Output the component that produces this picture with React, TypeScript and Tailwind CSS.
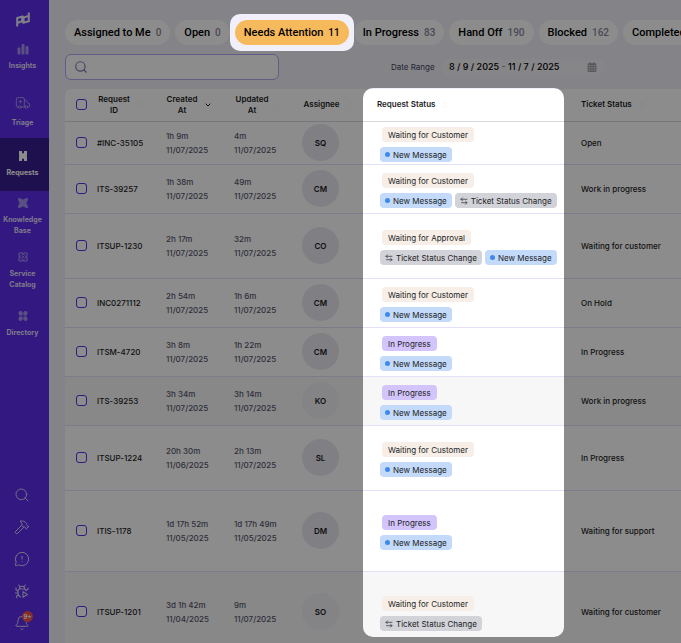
import React from 'react';
import { Ambulance, ChevronDown, ChevronsUpDown, Hammer, MessageCircleWarning, Search, Bell } from 'lucide-react';
import { FaCalendarDays } from 'react-icons/fa6';
import clsx from 'clsx';

type Tag = 'message' | 'change';

interface RequestRow {
  id: string;
  created: [string, string];
  updated: [string, string];
  assignee: string;
  status: string;
  tags: Tag[];
  ticket: string;
  height: string;
  shaded?: boolean;
}

const TABS = [
  { name: 'Assigned to Me', count: 0 },
  { name: 'Open', count: 0 },
  { name: 'Needs Attention', count: 11, active: true },
  { name: 'In Progress', count: 83 },
  { name: 'Hand Off', count: 190 },
  { name: 'Blocked', count: 162 },
  { name: 'Completed' },
];

const ROWS: RequestRow[] = [
  { id: '#INC-35105', created: ['1h 9m', '11/07/2025'], updated: ['4m', '11/07/2025'], assignee: 'SQ', status: 'Waiting for Customer', tags: ['message'], ticket: 'Open', height: 'h-[43px]' },
  { id: 'ITS-39257', created: ['1h 38m', '11/07/2025'], updated: ['49m', '11/07/2025'], assignee: 'CM', status: 'Waiting for Customer', tags: ['message', 'change'], ticket: 'Work in progress', height: 'h-[49px]' },
  { id: 'ITSUP-1230', created: ['2h 17m', '11/07/2025'], updated: ['32m', '11/07/2025'], assignee: 'CO', status: 'Waiting for Approval', tags: ['change', 'message'], ticket: 'Waiting for customer', height: 'h-[65px]' },
  { id: 'INC0271112', created: ['2h 54m', '11/07/2025'], updated: ['1h 6m', '11/07/2025'], assignee: 'CM', status: 'Waiting for Customer', tags: ['message'], ticket: 'On Hold', height: 'h-[49px]' },
  { id: 'ITSM-4720', created: ['3h 8m', '11/07/2025'], updated: ['1h 22m', '11/07/2025'], assignee: 'CM', status: 'In Progress', tags: ['message'], ticket: 'In Progress', height: 'h-[49px]' },
  { id: 'ITS-39253', created: ['3h 34m', '11/07/2025'], updated: ['3h 14m', '11/07/2025'], assignee: 'KO', status: 'In Progress', tags: ['message'], ticket: 'Work in progress', height: 'h-[49px]', shaded: true },
  { id: 'ITSUP-1224', created: ['20h 30m', '11/06/2025'], updated: ['2h 13m', '11/07/2025'], assignee: 'SL', status: 'Waiting for Customer', tags: ['message'], ticket: 'In Progress', height: 'h-[65px]' },
  { id: 'ITIS-1178', created: ['1d 17h 52m', '11/05/2025'], updated: ['1d 17h 49m', '11/05/2025'], assignee: 'DM', status: 'In Progress', tags: ['message'], ticket: 'Waiting for support', height: 'h-[81px]' },
  { id: 'ITSUP-1201', created: ['3d 1h 42m', '11/04/2025'], updated: ['9m', '11/07/2025'], assignee: 'SO', status: 'Waiting for Customer', tags: ['change'], ticket: 'Waiting for customer', height: 'h-[81px]', shaded: true },
];

const Logo = () => (
  <svg viewBox="0 0 14 15" className="w-[14px] h-[15px]" fill="none" stroke="#ece9f8" strokeWidth="2" strokeLinejoin="miter">
    <path d="M1.200 14.500V6L6.200 4.500v4.700l-5 1.800" />
    <path d="M12.800.5v8.700L7.600 10.700V5.600l5.200-1.800" />
    <path d="M6 4.500l1.800 1.100M6 9.200l1.800 1.300" />
  </svg>
);

const InsightsIcon = () => (
  <svg viewBox="0 0 12 12" className="size-3" fill="currentColor">
    <rect x="0.500" y="4.500" width="3" height="7" rx="1" />
    <rect x="4.500" y="1" width="3" height="10.500" rx="1" />
    <rect x="8.500" y="3" width="3" height="8.500" rx="1" />
  </svg>
);

const RequestsIcon = () => (
  <svg viewBox="0 0 12 12" className="size-3" fill="currentColor">
    <path d="M2 1h3v1.800l1 1 1-1V1h3v4.400l-.6.6.6.6V11H7V9.200l-1-1-1 1V11H2V6.600l.6-.6-.6-.6z" />
  </svg>
);

const KnowledgeIcon = () => (
  <svg viewBox="0 0 12 12" className="size-3" fill="currentColor">
    <path d="M1 1c1.800 0 3.700.5 5 1.800C7.300 1.500 9.200 1 11 1c0 1.900-.6 3.700-1.800 5 1.200 1.300 1.800 3.100 1.800 5-1.800 0-3.700-.6-5-1.800C4.700 10.400 2.800 11 1 11c0-1.900.6-3.700 1.800-5C1.600 4.700 1 2.900 1 1z" />
  </svg>
);

const CatalogIcon = () => (
  <svg viewBox="0 0 12 12" className="size-3" fill="none" stroke="currentColor" strokeWidth=".7">
    <rect x="2" y="2" width="8" height="8" rx="2" />
    <ellipse cx="6" cy="6" rx="5.600" ry="2.400" transform="rotate(45 6 6)" />
    <ellipse cx="6" cy="6" rx="5.600" ry="2.400" transform="rotate(-45 6 6)" />
    <circle cx="6" cy="6" r=".8" fill="currentColor" />
  </svg>
);

const DirectoryIcon = () => (
  <svg viewBox="0 0 12 12" className="size-3" fill="currentColor">
    <path d="M3.500 1a2.300 2.300 0 0 1 2 3.400v1.100H4.400A2.300 2.300 0 1 1 3.500 1z" />
    <path d="M8.500 1a2.300 2.300 0 0 0-2 3.400v1.100h1.100A2.300 2.300 0 1 0 8.500 1z" />
    <path d="M3.500 11a2.300 2.300 0 0 0 2-3.400V6.500H4.400A2.300 2.300 0 1 0 3.500 11z" />
    <path d="M8.500 11a2.300 2.300 0 0 1-2-3.400V6.500h1.100A2.300 2.300 0 1 1 8.500 11z" />
  </svg>
);

const BugPlayIcon = () => (
  <svg viewBox="0 0 24 24" className="size-4" fill="none" stroke="currentColor" strokeWidth="1.600" strokeLinecap="round" strokeLinejoin="round">
    <path d="M7 3l2 2.500M17 3l-2 2.500M8 9a4 4 0 0 1 8 0zM8 9c-1.500.6-2 2-2 4v2c0 3 1.500 5 4 6M16 9c1 .5 1.700 1.200 2 2.500" />
    <path d="M6 12L3 10.500V7M6 15H2M6.500 18L4 19.500V22M18 11l3-1.500V7" />
    <path d="M13.500 13v8.500l6.500-4.200z" />
  </svg>
);

const SwapIcon = () => (
  <svg viewBox="0 0 8 8" className="size-2 shrink-0" fill="none" stroke="#3c3c46" strokeWidth=".8" strokeLinecap="round" strokeLinejoin="round">
    <path d="M7 2.300H1M2.500.8L1 2.300l1.500 1.500M1.500 5.700H7M5.500 4.200L7 5.700 5.500 7.200" />
  </svg>
);

const NAV = [
  { label: 'Insights', icon: <InsightsIcon />, box: 'h-[53px] pt-[13px] gap-[5px]' },
  { label: 'Triage', icon: <Ambulance className="size-4" strokeWidth={1.5} />, box: 'h-[55px] pt-3 gap-[6px]' },
  { label: 'Requests', icon: <RequestsIcon />, box: 'h-[53px] pt-3 gap-[5px]', active: true },
  { label: 'Knowledge Base', icon: <KnowledgeIcon />, box: 'h-[53px] pt-[6px] gap-[5px]' },
  { label: 'Service Catalog', icon: <CatalogIcon />, box: 'h-[59px] pt-[7px] gap-[5px]' },
  { label: 'Directory', icon: <DirectoryIcon />, box: 'h-[53px] pt-[7px] gap-[5px]' },
];

const Sidebar: React.FC = () => (
  <aside className="w-[49px] shrink-0 h-full flex flex-col justify-between bg-[#5d2cec] overflow-hidden">
    <nav className="flex flex-col">
      <div className="h-[30px] pt-3 pl-4">
        <Logo />
      </div>
      {NAV.map((item) => (
        <a
          key={item.label}
          href="#"
          className={clsx(
            'flex flex-col items-center pl-1 pr-2 text-center text-[7px] leading-[11px] font-bold',
            item.box,
            item.active ? 'bg-[#381d91] text-white' : 'text-[#e2dbfb]',
          )}
        >
          <span className={item.active ? '' : 'text-[#a493ee]'}>{item.icon}</span>
          {item.label}
        </a>
      ))}
    </nav>

    <div className="flex flex-col gap-4 pl-[14px] text-[#d4ccf5]">
      <button aria-label="Search" className="size-4"><Search className="size-4" strokeWidth={1.5} /></button>
      <button aria-label="Tools" className="size-4"><Hammer className="size-4" strokeWidth={1.5} /></button>
      <button aria-label="Feedback" className="size-4"><MessageCircleWarning className="size-4" strokeWidth={1.5} /></button>
      <button aria-label="Debug" className="size-4"><BugPlayIcon /></button>
      <button aria-label="Notifications" className="relative size-4">
        <Bell className="size-4" strokeWidth={1.5} />
        <span className="absolute left-2 -top-1 size-[11px] rounded-full bg-[#f0524b] text-white text-[6px] leading-[11px] font-bold text-center">9+</span>
      </button>
      <span className="size-4 -mt-1 -mb-4 rounded-full bg-[#d4ccf5]" />
    </div>
  </aside>
);

const StatusTag: React.FC<{ tag: Tag }> = ({ tag }) =>
  tag === 'message' ? (
    <span className="h-[15px] px-[5px] flex items-center gap-[3px] rounded bg-[#c3dafa]">
      <span className="size-[5px] rounded-full bg-[#3f8ae8]" />
      New Message
    </span>
  ) : (
    <span className="h-[15px] px-[5px] flex items-center gap-[3px] rounded bg-[#d2d2d9]">
      <SwapIcon />
      Ticket Status Change
    </span>
  );

const Checkbox: React.FC<{ label: string }> = ({ label }) => (
  <input
    type="checkbox"
    aria-label={label}
    className="block ml-[11px] size-[11px] appearance-none rounded-[3px] border border-[#5d2cec] bg-white"
  />
);

const SortHint = () => <ChevronsUpDown className="size-2 shrink-0 text-[#f0f0f4]" strokeWidth={2} />;

const TimeCell: React.FC<{ value: [string, string] }> = ({ value }) => (
  <td className="p-0 text-[8px] leading-[14px] font-medium text-[#56566c]">
    {value[0]}
    <br />
    {value[1]}
  </td>
);

export default function App() {
  return (
    <div className="flex h-screen overflow-hidden bg-[#f0eef8] font-['Inter',sans-serif] text-[#1d1d24]">
      <Sidebar />

      <main className="flex-1 min-w-0 pl-4 pt-5">
        {/* Queue tabs */}
        <div className="flex gap-[5px] font-['Roboto',sans-serif]">
          {TABS.map((tab) => (
            <button
              key={tab.name}
              className={clsx(
                'h-[25px] shrink-0 rounded-full px-[9px] text-[11px] leading-[25px] font-medium whitespace-nowrap text-black',
                tab.active ? 'relative z-20' : 'bg-white',
              )}
            >
              {tab.active && <span className="absolute -inset-x-[5px] -inset-y-[6px] -z-10 rounded-[10px] bg-[#f1effa]" />}
              {tab.active && <span className="absolute inset-0 -z-10 rounded-full bg-[#f6b95b]" />}
              {tab.name}
              {tab.count !== undefined && (
                <span className={clsx('ml-[5px] text-[10px] font-medium', !tab.active && 'text-[#8a889c]')}>{tab.count}</span>
              )}
            </button>
          ))}
        </div>

        {/* Search and date range */}
        <div className="mt-[9px] flex items-center">
          <div className="relative w-[214px] shrink-0">
            <Search className="absolute left-[9px] top-[6px] size-[14px] text-[#7f7bb0]" strokeWidth={2} />
            <input
              type="search"
              aria-label="Search requests"
              className="block h-[26px] w-full rounded-md border border-[#b5a6f3] bg-white pl-7 text-[10px] outline-none"
            />
          </div>
          <span className="ml-28 w-[50px] shrink-0 whitespace-nowrap text-[8px] text-[#45455a]">Date Range</span>
          <button
            aria-label="Date range"
            className="flex h-[17px] w-[164px] shrink-0 items-center justify-between rounded-full bg-[#f4f2f6] px-2 text-[9px] font-medium whitespace-nowrap text-black"
          >
            <span>8 / 9 / 2025 <span className="text-[#8a889c]">-</span> 11 / 7 / 2025</span>
            <FaCalendarDays className="size-[10px] text-[#a3a3a9]" />
          </button>
        </div>

        {/* Requests table */}
        <div className="relative mt-[9px] rounded-tl-md bg-white">
          <table className="w-full table-fixed border-collapse text-left text-[8px]">
            <colgroup>
              <col className="w-8" />
              <col className="w-[69px]" />
              <col className="w-[68px]" />
              <col className="w-[68px]" />
              <col className="w-[75px]" />
              <col className="w-[204px]" />
              <col />
            </colgroup>
            <thead>
              <tr className="h-8 border-b border-[#d9d9e0] leading-[11px]">
                <th className="p-0"><Checkbox label="Select all" /></th>
                <th className="p-0 font-semibold">
                  <div className="flex items-center gap-[6px]">
                    <span className="block w-[34px] text-center">Request ID</span>
                    <SortHint />
                  </div>
                </th>
                <th className="p-0 font-semibold">
                  <div className="flex items-center gap-[6px]">
                    <span className="block w-8 text-center">Created At</span>
                    <ChevronDown className="size-2" strokeWidth={3} />
                  </div>
                </th>
                <th className="p-0 font-semibold">
                  <div className="flex items-center gap-[6px]">
                    <span className="block w-9 text-center">Updated At</span>
                    <SortHint />
                  </div>
                </th>
                <th className="p-0 font-semibold">
                  <div className="flex items-center gap-[6px]">
                    <span className="block w-[39px] text-center">Assignee</span>
                    <SortHint />
                  </div>
                </th>
                <th className="p-0 font-semibold">
                  <div className="flex items-center gap-[6px]">Request Status <SortHint /></div>
                </th>
                <th className="p-0 font-semibold">
                  <div className="flex items-center gap-[6px]">Ticket Status <SortHint /></div>
                </th>
              </tr>
            </thead>
            <tbody>
              {ROWS.map((row) => (
                <tr key={row.id} className={clsx('border-b border-[#e4e0fa]', row.height, row.shaded && 'bg-[#f7f7f8]')}>
                  <td className="p-0"><Checkbox label={`Select ${row.id}`} /></td>
                  <td className="p-0 font-medium">{row.id}</td>
                  <TimeCell value={row.created} />
                  <TimeCell value={row.updated} />
                  <td className="p-0">
                    <span
                      className={clsx(
                        'flex size-[37px] items-center justify-center rounded-full font-semibold',
                        row.shaded ? 'bg-[#f0eff5]' : 'bg-[#e9e7f1]',
                      )}
                    >
                      {row.assignee}
                    </span>
                  </td>
                  <td className="p-0">
                    <div className="flex flex-col items-start gap-[5px] pl-[3px] pt-1 whitespace-nowrap">
                      <span
                        className={clsx(
                          'ml-[2px] flex h-[15px] items-center rounded px-[6px]',
                          row.status === 'In Progress' ? 'bg-[#d3c5fb]' : 'bg-[#f6eee7]',
                        )}
                      >
                        {row.status}
                      </span>
                      <div className="flex gap-[3px]">
                        {row.tags.map((tag) => <StatusTag key={tag} tag={tag} />)}
                      </div>
                    </div>
                  </td>
                  <td className="p-0 font-medium">{row.ticket}</td>
                </tr>
              ))}
            </tbody>
          </table>

          {/* Spotlight over the status column, its shadow dims the rest of the page */}
          <div className="pointer-events-none absolute left-[298px] -top-[1px] z-10 h-[549px] w-[201px] rounded-[10px] shadow-[0_0_0_2000px_rgba(0,0,0,0.45)]" />
        </div>
      </main>
    </div>
  );
}
